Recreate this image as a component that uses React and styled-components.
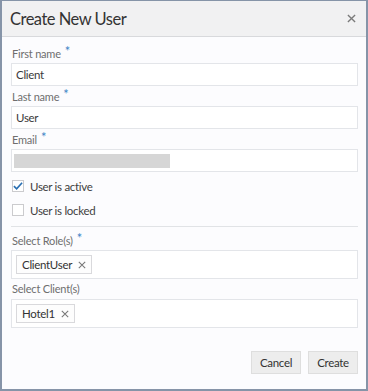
import React, { useState } from "react";
import styled, { createGlobalStyle } from "styled-components";

const Global = createGlobalStyle`
  html, body { margin: 0; padding: 0; background: #fff; }
  body { font-family: Lato, "Open Sans", "Liberation Sans", sans-serif; }
  * { box-sizing: border-box; }
`;

const Dialog = styled.div`
  width: 368px;
  height: 391px;
  border: 2px solid #8694a8;
  border-top-width: 1px;
  background: #fcfcfe;
  display: flex;
  flex-direction: column;
`;

const Header = styled.div`
  height: 36px;
  background: #f1f1f2;
  border-bottom: 1px solid #d8d9dc;
  display: flex;
  align-items: center;
  justify-content: space-between;
  padding: 0 9px 0 8px;
`;

const Title = styled.h1`
  margin: 0;
  font-size: 16.5px;
  font-weight: 400;
  color: #333;
  letter-spacing: -0.5px;
`;

const Close = styled.button`
  border: none;
  background: none;
  padding: 0;
  width: 12px;
  height: 12px;
  display: flex;
  align-items: center;
  justify-content: center;
  cursor: pointer;
`;

const Body = styled.div`
  flex: 1;
  padding: 6px 8px 0 9px;
  display: flex;
  flex-direction: column;
`;

const Label = styled.label`
  display: block;
  height: 20px;
  line-height: 20px;
  font-size: 11px;
  letter-spacing: -0.2px;
  color: #6e6e6e;
  padding-left: 1px;
`;

const Star = styled.span`
  color: #3c85c6;
  font-size: 13px;
  margin-left: 4px;
  position: relative;
  top: -2px;
`;

const Input = styled.div`
  height: 23px;
  border: 1px solid #e3e5e9;
  background: #fff;
  font-size: 11.5px;
  letter-spacing: -0.3px;
  color: #3a3a3a;
  display: flex;
  align-items: center;
  padding-left: 4px;
`;

const Redacted = styled.div`
  width: 156px;
  height: 14px;
  background: #d6d6d6;
  margin-left: -2px;
`;

const CheckRow = styled.label`
  height: 24px;
  display: flex;
  align-items: center;
  gap: 6px;
  font-size: 11.5px;
  letter-spacing: -0.3px;
  color: #3f3f3f;
  padding-left: 1px;
  &:first-of-type { margin-top: 2px; }
`;

const Box = styled.span`
  width: 12px;
  height: 12px;
  border: 1px solid #cbcbce;
  background: #fff;
  display: flex;
  align-items: center;
  justify-content: center;
`;

const Divider = styled.hr`
  border: none;
  border-top: 1px solid #e1e3e6;
  margin: 4px 0 3px;
  width: 100%;
`;

const Select = styled.div`
  min-height: 29px;
  border: 1px solid #e3e5e9;
  background: #fff;
  display: flex;
  align-items: center;
  padding: 0 4px;
`;

const Chip = styled.span`
  height: 19px;
  border: 1px solid #d9d9dc;
  background: #fdfdfd;
  display: inline-flex;
  align-items: center;
  gap: 6px;
  padding: 0 5px;
  font-size: 11.5px;
  letter-spacing: -0.3px;
  color: #333;
`;

const Footer = styled.div`
  display: flex;
  justify-content: flex-end;
  gap: 7px;
  padding-top: 23px;
`;

const Button = styled.button`
  width: 50px;
  height: 23px;
  border: 1px solid #dedede;
  background: #ededed;
  font-family: inherit;
  font-size: 11.5px;
  letter-spacing: -0.3px;
  color: #333;
  padding: 0;
`;

const X = ({ size = 8, color = "#666", w = 1.3 }) => (
  <svg width={size} height={size} viewBox="0 0 10 10">
    <path d="M1 1L9 9M9 1L1 9" stroke={color} strokeWidth={w} fill="none" />
  </svg>
);

const Check = () => (
  <svg width="11" height="10" viewBox="0 0 11 10">
    <path d="M1 5.2L4 8.2L10 1.5" stroke="#2a6fb2" strokeWidth="1.8" fill="none" />
  </svg>
);

const Field = ({ label, required, children }) => (
  <div>
    <Label>
      {label}
      {required && <Star>*</Star>}
    </Label>
    {children}
  </div>
);

export default function App() {
  const [active, setActive] = useState(true);
  const [locked, setLocked] = useState(false);
  return (
    <>
      <Global />
      <Dialog>
        <Header>
          <Title>Create New User</Title>
          <Close aria-label="close">
            <X size={9} color="#7a7a7a" w={1.5} />
          </Close>
        </Header>
        <Body>
          <Field label="First name" required>
            <Input>Client</Input>
          </Field>
          <Field label="Last name" required>
            <Input>User</Input>
          </Field>
          <Field label="Email" required>
            <Input>
              <Redacted />
            </Input>
          </Field>
          <CheckRow onClick={() => setActive(!active)}>
            <Box>{active && <Check />}</Box>
            User is active
          </CheckRow>
          <CheckRow onClick={() => setLocked(!locked)}>
            <Box>{locked && <Check />}</Box>
            User is locked
          </CheckRow>
          <Divider />
          <Field label="Select Role(s)" required>
            <Select>
              <Chip>
                ClientUser <X size={8} color="#777" />
              </Chip>
            </Select>
          </Field>
          <Field label="Select Client(s)">
            <Select>
              <Chip>
                Hotel1 <X size={8} color="#777" />
              </Chip>
            </Select>
          </Field>
          <Footer>
            <Button>Cancel</Button>
            <Button>Create</Button>
          </Footer>
        </Body>
      </Dialog>
    </>
  );
}
